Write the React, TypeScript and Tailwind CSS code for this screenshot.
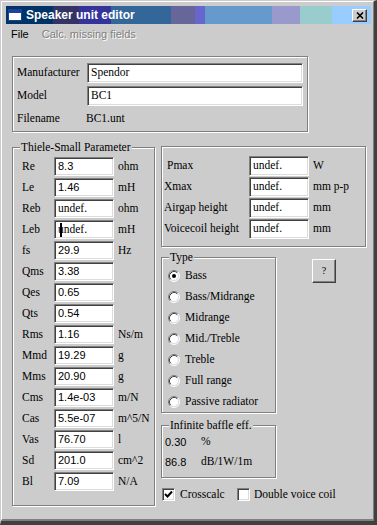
import React from "react"

const serif = "font-['Liberation_Serif',serif] text-[11.5px]"
const sans = "font-['Liberation_Sans',sans-serif] text-[11px]"
const groupBox = "relative border border-[#808080] shadow-[1px_1px_0_#fff,inset_1px_1px_0_#fff]"
const sunken =
  "border border-t-[#808080] border-l-[#808080] border-r-white border-b-white shadow-[inset_1px_1px_0_#404040,inset_-1px_-1px_0_#dcdcdc]"
const raised =
  "border border-t-white border-l-white border-r-[#404040] border-b-[#404040] shadow-[inset_-1px_-1px_0_#808080]"

const params: [string, string, string][] = [
  ["Re", "8.3", "ohm"],
  ["Le", "1.46", "mH"],
  ["Reb", "undef.", "ohm"],
  ["Leb", "undef.", "mH"],
  ["fs", "29.9", "Hz"],
  ["Qms", "3.38", ""],
  ["Qes", "0.65", ""],
  ["Qts", "0.54", ""],
  ["Rms", "1.16", "Ns/m"],
  ["Mmd", "19.29", "g"],
  ["Mms", "20.90", "g"],
  ["Cms", "1.4e-03", "m/N"],
  ["Cas", "5.5e-07", "m^5/N"],
  ["Vas", "76.70", "l"],
  ["Sd", "201.0", "cm^2"],
  ["Bl", "7.09", "N/A"],
]

const limits = [
  ["Pmax", "undef.", "W"],
  ["Xmax", "undef.", "mm p-p"],
  ["Airgap height", "undef.", "mm"],
  ["Voicecoil height", "undef.", "mm"],
]

const types = ["Bass", "Bass/Midrange", "Midrange", "Mid./Treble", "Treble", "Full range", "Passive radiator"]

function Field({ value, className = "", caret = false }: { value: string; className?: string; caret?: boolean }) {
  const numeric = /^[0-9.e\-]+$/.test(value)
  return (
    <div className={`relative flex items-center bg-white pl-[3px] text-black ${sunken} ${numeric ? sans : serif} ${className}`}>
      {caret && <span className="absolute left-[5px] top-[2px] h-[14px] w-[2px] bg-black" />}
      {value}
    </div>
  )
}

function Legend({ children }: { children: React.ReactNode }) {
  return (
    <span className={`absolute -top-[8px] left-[7px] bg-[#cccccc] px-[1px] leading-[14px] ${serif}`}>{children}</span>
  )
}

function Radio({ checked }: { checked?: boolean }) {
  return (
    <svg width="12" height="12" viewBox="0 0 12 12" className="shrink-0">
      <circle cx="6" cy="6" r="5" fill="white" />
      <path d="M2.11 9.89 A5.5 5.5 0 0 1 9.89 2.11" fill="none" stroke="#808080" />
      <path d="M9.89 2.11 A5.5 5.5 0 0 1 2.11 9.89" fill="none" stroke="white" />
      <path d="M2.82 9.18 A4.5 4.5 0 0 1 9.18 2.82" fill="none" stroke="#404040" />
      <path d="M9.18 2.82 A4.5 4.5 0 0 1 2.82 9.18" fill="none" stroke="#dcdcdc" />
      {checked && <circle cx="6" cy="6" r="2" fill="black" />}
    </svg>
  )
}

function Checkbox({ checked }: { checked?: boolean }) {
  return (
    <div className={`flex h-[13px] w-[13px] shrink-0 items-center justify-center bg-white ${sunken}`}>
      {checked && (
        <svg width="9" height="9" viewBox="0 0 9 9">
          <path d="M1 4 L3.5 6.5 L8 1.5" fill="none" stroke="black" strokeWidth="2" />
        </svg>
      )}
    </div>
  )
}

export default function App() {
  return (
    <div className="h-[525px] w-[377px] overflow-hidden border-t border-l border-r-[3px] border-b-[4px] border-t-[#cccccc] border-l-[#cccccc] border-r-[#404040] border-b-[#404040] bg-[#cccccc]">
      <div className="flex h-full flex-col border-t border-l border-r border-b-2 border-t-white border-l-white border-r-[#808080] border-b-[#808080] pt-[4px] pl-[4px] pr-[2px]">
        {/* title bar */}
        <div className="flex h-[18px] shrink-0 items-center bg-[linear-gradient(to_right,#003366_0px,#003366_47px,#333366_47px,#333366_73px,#333399_73px,#333399_105px,#336699_105px,#336699_165px,#666699_165px,#666699_189px,#6666cc_189px,#6666cc_199px,#6699cc_199px,#6699cc_266px,#9999cc_266px,#9999cc_294px,#99cccc_294px,#99cccc_326px,#99ccff_326px)]">
          <svg width="14" height="12" viewBox="0 0 14 12" className="ml-[2px] shrink-0">
            <rect x="0.5" y="0.5" width="13" height="11" fill="white" stroke="#1f3f8f" />
            <rect x="1" y="1" width="12" height="3" fill="#2040a0" />
          </svg>
          <span className="ml-[4px] flex-1 font-['Liberation_Sans',sans-serif] text-[12px] font-bold text-white">
            Speaker unit editor
          </span>
          <div className={`mr-[4px] flex h-[13px] w-[15px] items-center justify-center bg-[#cccccc] ${raised}`}>
            <svg width="8" height="7" viewBox="0 0 8 7">
              <path d="M1 0.5 L7 6.5 M7 0.5 L1 6.5" stroke="black" strokeWidth="1.6" />
            </svg>
          </div>
        </div>

        {/* menu */}
        <div className={`flex h-[20px] shrink-0 items-center pl-[5px] ${sans}`}>
          <span className="text-black">File</span>
          <span className="ml-[13px] text-[#808080] [text-shadow:1px_1px_0_#fff]">Calc. missing fields</span>
        </div>

        {/* body */}
        <div className="flex flex-col pl-[6px] pt-[12px]">
          <div className={`${groupBox} h-[76px] w-[296px] pl-[4px] pt-[6px]`}>
            <div className="flex h-[20px] items-center">
              <span className={`w-[70px] ${serif}`}>Manufacturer</span>
              <Field value="Spendor" className="h-[20px] w-[216px]" />
            </div>
            <div className="mt-[3px] flex h-[20px] items-center">
              <span className={`w-[70px] ${serif}`}>Model</span>
              <Field value="BC1" className="h-[20px] w-[216px]" />
            </div>
            <div className="mt-[3px] flex h-[20px] items-center">
              <span className={`w-[69px] ${serif}`}>Filename</span>
              <span className={serif}>BC1.unt</span>
            </div>
          </div>

          <div className="mt-[14px] flex gap-[6px]">
            {/* Thiele-Small */}
            <div className={`${groupBox} mt-[1px] h-[359px] w-[143px] pl-[9px] pt-[9px]`}>
              <Legend>Thiele-Small Parameter</Legend>
              <div className="flex flex-col gap-[2px]">
                {params.map(([label, value, unit]) => (
                  <div key={label} className="flex h-[19px] items-center">
                    <span className={`w-[32px] ${serif}`}>{label}</span>
                    <Field value={value} caret={label === "Leb"} className="h-[19px] w-[60px]" />
                    <span className={`ml-[4px] ${serif}`}>{unit}</span>
                  </div>
                ))}
              </div>
            </div>

            {/* right column */}
            <div className="flex w-[205px] flex-col">
              <div className={`${groupBox} h-[101px] w-[205px] pl-[2px] pt-[9px]`}>
                <div className="flex flex-col gap-[1px]">
                  {limits.map(([label, value, unit], i) => (
                    <div key={label} className="flex h-[20px] items-center">
                      <span className={`w-[85px] ${serif} ${i === 0 ? "pl-[3px]" : ""}`}>{label}</span>
                      <Field value={value} className="h-[20px] w-[60px]" />
                      <span className={`ml-[4px] ${serif}`}>{unit}</span>
                    </div>
                  ))}
                </div>
              </div>

              <div className="mt-[10px] flex items-start">
                <div className={`${groupBox} h-[156px] w-[115px] pl-[6px] pt-[7px]`}>
                  <Legend>Type</Legend>
                  {types.map((t, i) => (
                    <div key={t} className="flex h-[21px] items-center gap-[5px]">
                      <Radio checked={i === 0} />
                      <span className={serif}>{t}</span>
                    </div>
                  ))}
                </div>
                <div
                  className={`ml-[36px] mt-[2px] flex h-[24px] w-[24px] items-start justify-center bg-[#cccccc] pt-[5px] text-[10px] leading-[12px] font-['Liberation_Serif',serif] ${raised}`}
                >
                  ?
                </div>
              </div>

              <div className={`${groupBox} mt-[12px] h-[53px] w-[115px] pl-[3px] pt-[6px]`}>
                <Legend>Infinite baffle eff.</Legend>
                <div className="flex h-[20px] items-center">
                  <span className={`w-[36px] ${sans}`}>0.30</span>
                  <span className={serif}>%</span>
                </div>
                <div className="flex h-[20px] items-center">
                  <span className={`w-[36px] ${sans}`}>86.8</span>
                  <span className={serif}>dB/1W/1m</span>
                </div>
              </div>

              <div className="mt-[10px] flex h-[13px] items-center pl-[1px]">
                <div className="flex w-[75px] items-center gap-[5px]">
                  <Checkbox checked />
                  <span className={serif}>Crosscalc</span>
                </div>
                <div className="flex items-center gap-[4px]">
                  <Checkbox />
                  <span className={serif}>Double voice coil</span>
                </div>
              </div>
            </div>
          </div>
        </div>
      </div>
    </div>
  )
}
